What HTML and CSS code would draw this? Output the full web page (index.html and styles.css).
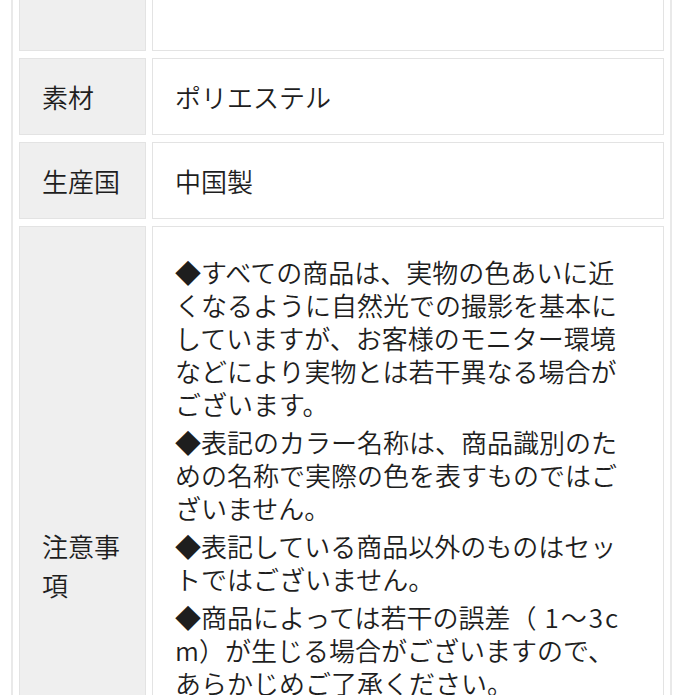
FILE: index.html
```html
<!DOCTYPE html>
<html lang="ja">
<head>
<meta charset="utf-8">
<title>商品詳細</title>
<link rel="stylesheet" href="styles.css">
</head>
<body>
<div class="spec">
  <table class="spec-table">
    <tr class="row-tall">
      <th class="label"></th>
      <td class="value"></td>
    </tr>
    <tr>
      <th class="label">素材</th>
      <td class="value">ポリエステル</td>
    </tr>
    <tr>
      <th class="label">生産国</th>
      <td class="value">中国製</td>
    </tr>
    <tr>
      <th class="label">注意事項</th>
      <td class="value notes">
        <p>◆すべての商品は、実物の色あいに近<br>くなるように自然光での撮影を基本に<br>していますが、お客様のモニター環境<br>などにより実物とは若干異なる場合が<br>ございます。</p>
        <p>◆表記のカラー名称は、商品識別のた<br>めの名称で実際の色を表すものではご<br>ざいません。</p>
        <p>◆表記している商品以外のものはセッ<br>トではございません。</p>
        <p>◆商品によっては若干の誤差（<span class="num">1〜3c</span><br>m）が生じる場合がございますので、<br>あらかじめご了承ください。</p>
        <p>◆洗濯の際は色落ちの恐れがありますので、単独で洗ってください。</p>
        <p>◆製品の仕様は予告なく変更になる場合がございます。予めご了承くださいませ。</p>
      </td>
    </tr>
  </table>
</div>
</body>
</html>
```

FILE: styles.css
```css
html, body {
  margin: 0;
  padding: 0;
  background: #ffffff;
}

body {
  font-family: "Noto Sans CJK JP", "Noto Sans", sans-serif;
  font-weight: 350;
  color: #1e1e1e;
}

.spec {
  margin: -107px 23px 0 11px;
  border-left: 2px solid #e9e9e9;
  border-right: 2px solid #e9e9e9;
  background: #ffffff;
}

.spec-table {
  width: 100%;
  table-layout: fixed;
  border-collapse: separate;
  border-spacing: 6px 7px;
}

.label,
.value {
  box-sizing: border-box;
  border: 1px solid #e3e3e3;
  font-size: 26px;
  font-weight: 350;
  text-align: left;
  vertical-align: middle;
}

.label {
  width: 127px;
  background: #efefef;
  padding: 18px 22px;
  line-height: 39px;
}

.value {
  background: #ffffff;
  padding: 18px 22px;
  line-height: 39px;
}

.row-tall .label,
.row-tall .value {
  height: 151px;
}

.notes {
  padding: 23px 22px;
  line-height: 33px;
}

.notes p {
  margin: 5px 0;
}

.num {
  padding-left: 8px;
  letter-spacing: 2px;
}
```
